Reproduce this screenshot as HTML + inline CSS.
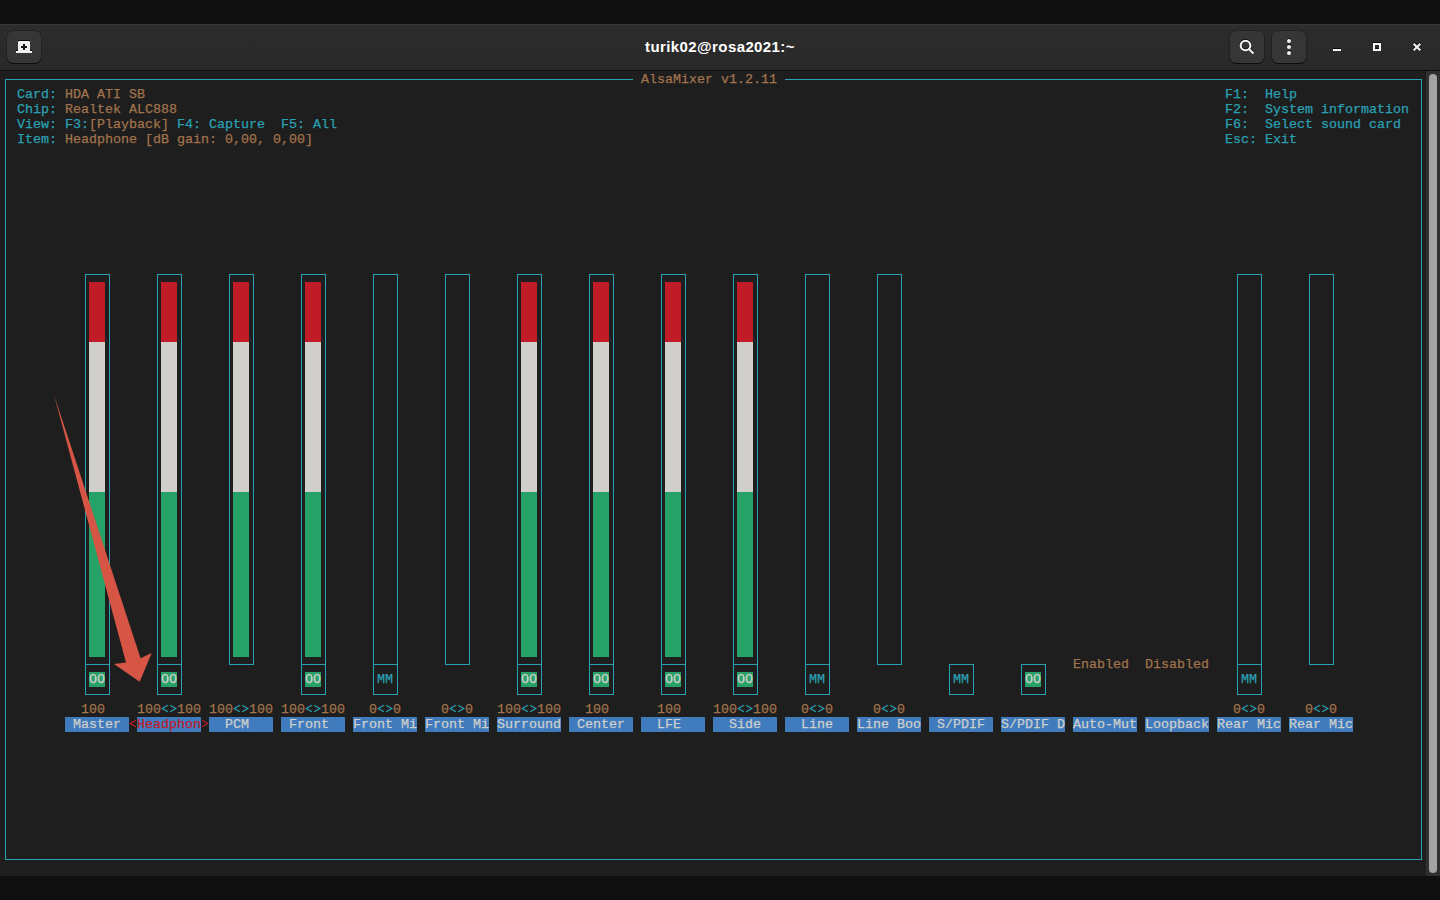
<!DOCTYPE html>
<html><head><meta charset="utf-8"><style>
html,body{margin:0;padding:0;}
body{width:1440px;height:900px;position:relative;overflow:hidden;background:#0f0f0f;}
div,span,svg{position:absolute;}
.t{font-family:"Liberation Mono",monospace;font-size:13.3333px;line-height:15px;height:15px;white-space:pre;font-weight:normal;-webkit-text-stroke:0.25px currentColor;}
.title{font-family:"Liberation Sans",sans-serif;font-weight:bold;font-size:15px;letter-spacing:0.4px;color:#ffffff;white-space:pre;}
.btn{background:#363636;border-radius:6px;box-shadow:0 0 0 1px rgba(0,0,0,0.2),0 1px 0 rgba(0,0,0,0.6);}
.sw{font-weight:normal;}
.rg{font-weight:normal;}
.ic{overflow:visible;filter:drop-shadow(0 -1px 0 rgba(0,0,0,0.85));}
</style></head><body>
<div style="left:0;top:24px;width:1440px;height:46px;background:linear-gradient(#2c2c2c,#292929);"></div>
<div style="left:0;top:24px;width:1440px;height:1px;background:#383838;"></div>
<div style="left:0;top:70px;width:1440px;height:1px;background:#0e0e0e;"></div>
<div style="left:0;top:71px;width:1440px;height:805px;background:#1e1e1e;"></div>
<div style="left:1426px;top:71px;width:14px;height:805px;background:#303030;"></div>
<div style="left:1429px;top:74px;width:8px;height:799px;border-radius:4px;background:#a3a3a3;"></div>
<div class="btn" style="left:7px;top:31px;width:34px;height:32px;"></div>
<svg class="ic" style="left:7px;top:31px" width="34" height="32" viewBox="0 0 34 32">
 <path d="M12 10 h10 a1 1 0 0 1 1 1 v9 h2 v2 h-16 v-2 h2 v-9 a1 1 0 0 1 1-1z" fill="#f0f0f0"/>
 <path d="M16 13 h2 v2 h2 v2 h-2 v2 h-2 v-2 h-2 v-2 h2z" fill="#1a1a1a"/>
</svg>
<div class="btn" style="left:1230px;top:31px;width:34px;height:32px;"></div>
<svg class="ic" style="left:1230px;top:31px" width="34" height="32" viewBox="0 0 34 32">
 <circle cx="15.5" cy="14.5" r="4.8" fill="none" stroke="#f5f5f5" stroke-width="2"/>
 <path d="M19 18 L23.5 22.5" stroke="#f5f5f5" stroke-width="2"/>
</svg>
<div class="btn" style="left:1272px;top:31px;width:34px;height:32px;"></div>
<svg class="ic" style="left:1272px;top:31px" width="34" height="32" viewBox="0 0 34 32">
 <circle cx="17" cy="10" r="2" fill="#f0f0f0"/><circle cx="17" cy="16" r="2" fill="#f0f0f0"/><circle cx="17" cy="22" r="2" fill="#f0f0f0"/>
</svg>
<svg class="ic" style="left:1333px;top:43px" width="8" height="8" viewBox="0 0 8 8"><rect x="0" y="6" width="8" height="2" fill="#f8f8f8"/></svg>
<svg class="ic" style="left:1373px;top:43px" width="8" height="8" viewBox="0 0 8 8"><path d="M0 0h8v8h-8z M2 2v4h4v-4z" fill="#f8f8f8" fill-rule="evenodd"/></svg>
<svg class="ic" style="left:1413px;top:43px" width="8" height="8" viewBox="0 0 8 8"><path d="M0.7 0.7 L7.3 7.3 M7.3 0.7 L0.7 7.3" stroke="#f0f0f0" stroke-width="2"/></svg>
<span class="title" style="left:0;top:38px;width:1440px;text-align:center;">turik02@rosa2021:~</span>
<div style="left:5px;top:79px;width:628px;height:1px;background:#2aa1b3;"></div>
<div style="left:785px;top:79px;width:637px;height:1px;background:#2aa1b3;"></div>
<span class="t" style="left:641px;top:72px;color:#a2734c;">AlsaMixer v1.2.11</span>
<div style="left:5px;top:79px;width:1px;height:781px;background:#2aa1b3;"></div>
<div style="left:1421px;top:79px;width:1px;height:781px;background:#2aa1b3;"></div>
<div style="left:5px;top:859px;width:1417px;height:1px;background:#2aa1b3;"></div>
<span class="t" style="left:17px;top:87px;color:#2aa1b3;">Card:</span>
<span class="t" style="left:65px;top:87px;color:#a2734c;">HDA ATI SB</span>
<span class="t" style="left:17px;top:102px;color:#2aa1b3;">Chip:</span>
<span class="t" style="left:65px;top:102px;color:#a2734c;">Realtek ALC888</span>
<span class="t" style="left:17px;top:132px;color:#2aa1b3;">Item:</span>
<span class="t" style="left:65px;top:132px;color:#a2734c;">Headphone [dB gain: 0,00, 0,00]</span>
<span class="t" style="left:17px;top:117px;color:#2aa1b3;">View:</span>
<span class="t" style="left:65px;top:117px;color:#2aa1b3;">F3:</span>
<span class="t" style="left:89px;top:117px;color:#a2734c;">[Playback]</span>
<span class="t" style="left:169px;top:117px;color:#2aa1b3;"> F4: Capture  F5: All</span>
<span class="t" style="left:1225px;top:87px;color:#2aa1b3;">F1:  Help</span>
<span class="t" style="left:1225px;top:102px;color:#2aa1b3;">F2:  System information</span>
<span class="t" style="left:1225px;top:117px;color:#2aa1b3;">F6:  Select sound card</span>
<span class="t" style="left:1225px;top:132px;color:#2aa1b3;">Esc: Exit</span>
<div style="left:85px;top:274px;width:25px;height:1px;background:#2aa1b3;"></div>
<div style="left:85px;top:274px;width:1px;height:421px;background:#2aa1b3;"></div>
<div style="left:109px;top:274px;width:1px;height:421px;background:#2aa1b3;"></div>
<div style="left:85px;top:694px;width:25px;height:1px;background:#2aa1b3;"></div>
<div style="left:85px;top:664px;width:25px;height:1px;background:#2aa1b3;"></div>
<div style="left:89px;top:282px;width:16px;height:60px;background:#c01c28;"></div>
<div style="left:89px;top:342px;width:16px;height:150px;background:#d0cfcc;"></div>
<div style="left:89px;top:492px;width:16px;height:165px;background:#26a269;"></div>
<span class="t sw" style="left:89px;top:672px;color:#d0cfcc;background:#26a269;">OO</span>
<span class="t" style="left:81px;top:702px;color:#a2734c;">100</span>
<span class="t lab" style="left:65px;top:717px;color:#d0cfcc;background:#3f7bbd;"> Master </span>
<div style="left:157px;top:274px;width:25px;height:1px;background:#2aa1b3;"></div>
<div style="left:157px;top:274px;width:1px;height:421px;background:#2aa1b3;"></div>
<div style="left:181px;top:274px;width:1px;height:421px;background:#2aa1b3;"></div>
<div style="left:157px;top:694px;width:25px;height:1px;background:#2aa1b3;"></div>
<div style="left:157px;top:664px;width:25px;height:1px;background:#2aa1b3;"></div>
<div style="left:161px;top:282px;width:16px;height:60px;background:#c01c28;"></div>
<div style="left:161px;top:342px;width:16px;height:150px;background:#d0cfcc;"></div>
<div style="left:161px;top:492px;width:16px;height:165px;background:#26a269;"></div>
<span class="t sw" style="left:161px;top:672px;color:#d0cfcc;background:#26a269;">OO</span>
<span class="t" style="left:137px;top:702px;color:#a2734c;">100</span>
<svg style="left:161px;top:702px" width="8" height="15" viewBox="0 0 8 15"><polyline points="6.9,3.3 1.2,6.5 6.9,9.7" fill="none" stroke="#2aa1b3" stroke-width="1.25"/></svg>
<svg style="left:169px;top:702px" width="8" height="15" viewBox="0 0 8 15"><polyline points="1.1,3.3 6.8,6.5 1.1,9.7" fill="none" stroke="#2aa1b3" stroke-width="1.25"/></svg>
<span class="t" style="left:177px;top:702px;color:#a2734c;">100</span>
<svg style="left:129px;top:717px" width="8" height="15" viewBox="0 0 8 15"><polyline points="6.9,3.3 1.2,6.5 6.9,9.7" fill="none" stroke="#c01c28" stroke-width="1.25"/></svg>
<svg style="left:201px;top:717px" width="8" height="15" viewBox="0 0 8 15"><polyline points="1.1,3.3 6.8,6.5 1.1,9.7" fill="none" stroke="#c01c28" stroke-width="1.25"/></svg>
<span class="t lab" style="left:137px;top:717px;color:#c01c28;background:#3f7bbd;">Headphon</span>
<div style="left:229px;top:274px;width:25px;height:1px;background:#2aa1b3;"></div>
<div style="left:229px;top:274px;width:1px;height:391px;background:#2aa1b3;"></div>
<div style="left:253px;top:274px;width:1px;height:391px;background:#2aa1b3;"></div>
<div style="left:229px;top:664px;width:25px;height:1px;background:#2aa1b3;"></div>
<div style="left:233px;top:282px;width:16px;height:60px;background:#c01c28;"></div>
<div style="left:233px;top:342px;width:16px;height:150px;background:#d0cfcc;"></div>
<div style="left:233px;top:492px;width:16px;height:165px;background:#26a269;"></div>
<span class="t" style="left:209px;top:702px;color:#a2734c;">100</span>
<svg style="left:233px;top:702px" width="8" height="15" viewBox="0 0 8 15"><polyline points="6.9,3.3 1.2,6.5 6.9,9.7" fill="none" stroke="#2aa1b3" stroke-width="1.25"/></svg>
<svg style="left:241px;top:702px" width="8" height="15" viewBox="0 0 8 15"><polyline points="1.1,3.3 6.8,6.5 1.1,9.7" fill="none" stroke="#2aa1b3" stroke-width="1.25"/></svg>
<span class="t" style="left:249px;top:702px;color:#a2734c;">100</span>
<span class="t lab" style="left:209px;top:717px;color:#d0cfcc;background:#3f7bbd;">  PCM   </span>
<div style="left:301px;top:274px;width:25px;height:1px;background:#2aa1b3;"></div>
<div style="left:301px;top:274px;width:1px;height:421px;background:#2aa1b3;"></div>
<div style="left:325px;top:274px;width:1px;height:421px;background:#2aa1b3;"></div>
<div style="left:301px;top:694px;width:25px;height:1px;background:#2aa1b3;"></div>
<div style="left:301px;top:664px;width:25px;height:1px;background:#2aa1b3;"></div>
<div style="left:305px;top:282px;width:16px;height:60px;background:#c01c28;"></div>
<div style="left:305px;top:342px;width:16px;height:150px;background:#d0cfcc;"></div>
<div style="left:305px;top:492px;width:16px;height:165px;background:#26a269;"></div>
<span class="t sw" style="left:305px;top:672px;color:#d0cfcc;background:#26a269;">OO</span>
<span class="t" style="left:281px;top:702px;color:#a2734c;">100</span>
<svg style="left:305px;top:702px" width="8" height="15" viewBox="0 0 8 15"><polyline points="6.9,3.3 1.2,6.5 6.9,9.7" fill="none" stroke="#2aa1b3" stroke-width="1.25"/></svg>
<svg style="left:313px;top:702px" width="8" height="15" viewBox="0 0 8 15"><polyline points="1.1,3.3 6.8,6.5 1.1,9.7" fill="none" stroke="#2aa1b3" stroke-width="1.25"/></svg>
<span class="t" style="left:321px;top:702px;color:#a2734c;">100</span>
<span class="t lab" style="left:281px;top:717px;color:#d0cfcc;background:#3f7bbd;"> Front  </span>
<div style="left:373px;top:274px;width:25px;height:1px;background:#2aa1b3;"></div>
<div style="left:373px;top:274px;width:1px;height:421px;background:#2aa1b3;"></div>
<div style="left:397px;top:274px;width:1px;height:421px;background:#2aa1b3;"></div>
<div style="left:373px;top:694px;width:25px;height:1px;background:#2aa1b3;"></div>
<div style="left:373px;top:664px;width:25px;height:1px;background:#2aa1b3;"></div>
<span class="t" style="left:377px;top:672px;color:#2aa1b3;">MM</span>
<span class="t" style="left:369px;top:702px;color:#a2734c;">0</span>
<svg style="left:377px;top:702px" width="8" height="15" viewBox="0 0 8 15"><polyline points="6.9,3.3 1.2,6.5 6.9,9.7" fill="none" stroke="#2aa1b3" stroke-width="1.25"/></svg>
<svg style="left:385px;top:702px" width="8" height="15" viewBox="0 0 8 15"><polyline points="1.1,3.3 6.8,6.5 1.1,9.7" fill="none" stroke="#2aa1b3" stroke-width="1.25"/></svg>
<span class="t" style="left:393px;top:702px;color:#a2734c;">0</span>
<span class="t lab" style="left:353px;top:717px;color:#d0cfcc;background:#3f7bbd;">Front Mi</span>
<div style="left:445px;top:274px;width:25px;height:1px;background:#2aa1b3;"></div>
<div style="left:445px;top:274px;width:1px;height:391px;background:#2aa1b3;"></div>
<div style="left:469px;top:274px;width:1px;height:391px;background:#2aa1b3;"></div>
<div style="left:445px;top:664px;width:25px;height:1px;background:#2aa1b3;"></div>
<span class="t" style="left:441px;top:702px;color:#a2734c;">0</span>
<svg style="left:449px;top:702px" width="8" height="15" viewBox="0 0 8 15"><polyline points="6.9,3.3 1.2,6.5 6.9,9.7" fill="none" stroke="#2aa1b3" stroke-width="1.25"/></svg>
<svg style="left:457px;top:702px" width="8" height="15" viewBox="0 0 8 15"><polyline points="1.1,3.3 6.8,6.5 1.1,9.7" fill="none" stroke="#2aa1b3" stroke-width="1.25"/></svg>
<span class="t" style="left:465px;top:702px;color:#a2734c;">0</span>
<span class="t lab" style="left:425px;top:717px;color:#d0cfcc;background:#3f7bbd;">Front Mi</span>
<div style="left:517px;top:274px;width:25px;height:1px;background:#2aa1b3;"></div>
<div style="left:517px;top:274px;width:1px;height:421px;background:#2aa1b3;"></div>
<div style="left:541px;top:274px;width:1px;height:421px;background:#2aa1b3;"></div>
<div style="left:517px;top:694px;width:25px;height:1px;background:#2aa1b3;"></div>
<div style="left:517px;top:664px;width:25px;height:1px;background:#2aa1b3;"></div>
<div style="left:521px;top:282px;width:16px;height:60px;background:#c01c28;"></div>
<div style="left:521px;top:342px;width:16px;height:150px;background:#d0cfcc;"></div>
<div style="left:521px;top:492px;width:16px;height:165px;background:#26a269;"></div>
<span class="t sw" style="left:521px;top:672px;color:#d0cfcc;background:#26a269;">OO</span>
<span class="t" style="left:497px;top:702px;color:#a2734c;">100</span>
<svg style="left:521px;top:702px" width="8" height="15" viewBox="0 0 8 15"><polyline points="6.9,3.3 1.2,6.5 6.9,9.7" fill="none" stroke="#2aa1b3" stroke-width="1.25"/></svg>
<svg style="left:529px;top:702px" width="8" height="15" viewBox="0 0 8 15"><polyline points="1.1,3.3 6.8,6.5 1.1,9.7" fill="none" stroke="#2aa1b3" stroke-width="1.25"/></svg>
<span class="t" style="left:537px;top:702px;color:#a2734c;">100</span>
<span class="t lab" style="left:497px;top:717px;color:#d0cfcc;background:#3f7bbd;">Surround</span>
<div style="left:589px;top:274px;width:25px;height:1px;background:#2aa1b3;"></div>
<div style="left:589px;top:274px;width:1px;height:421px;background:#2aa1b3;"></div>
<div style="left:613px;top:274px;width:1px;height:421px;background:#2aa1b3;"></div>
<div style="left:589px;top:694px;width:25px;height:1px;background:#2aa1b3;"></div>
<div style="left:589px;top:664px;width:25px;height:1px;background:#2aa1b3;"></div>
<div style="left:593px;top:282px;width:16px;height:60px;background:#c01c28;"></div>
<div style="left:593px;top:342px;width:16px;height:150px;background:#d0cfcc;"></div>
<div style="left:593px;top:492px;width:16px;height:165px;background:#26a269;"></div>
<span class="t sw" style="left:593px;top:672px;color:#d0cfcc;background:#26a269;">OO</span>
<span class="t" style="left:585px;top:702px;color:#a2734c;">100</span>
<span class="t lab" style="left:569px;top:717px;color:#d0cfcc;background:#3f7bbd;"> Center </span>
<div style="left:661px;top:274px;width:25px;height:1px;background:#2aa1b3;"></div>
<div style="left:661px;top:274px;width:1px;height:421px;background:#2aa1b3;"></div>
<div style="left:685px;top:274px;width:1px;height:421px;background:#2aa1b3;"></div>
<div style="left:661px;top:694px;width:25px;height:1px;background:#2aa1b3;"></div>
<div style="left:661px;top:664px;width:25px;height:1px;background:#2aa1b3;"></div>
<div style="left:665px;top:282px;width:16px;height:60px;background:#c01c28;"></div>
<div style="left:665px;top:342px;width:16px;height:150px;background:#d0cfcc;"></div>
<div style="left:665px;top:492px;width:16px;height:165px;background:#26a269;"></div>
<span class="t sw" style="left:665px;top:672px;color:#d0cfcc;background:#26a269;">OO</span>
<span class="t" style="left:657px;top:702px;color:#a2734c;">100</span>
<span class="t lab" style="left:641px;top:717px;color:#d0cfcc;background:#3f7bbd;">  LFE   </span>
<div style="left:733px;top:274px;width:25px;height:1px;background:#2aa1b3;"></div>
<div style="left:733px;top:274px;width:1px;height:421px;background:#2aa1b3;"></div>
<div style="left:757px;top:274px;width:1px;height:421px;background:#2aa1b3;"></div>
<div style="left:733px;top:694px;width:25px;height:1px;background:#2aa1b3;"></div>
<div style="left:733px;top:664px;width:25px;height:1px;background:#2aa1b3;"></div>
<div style="left:737px;top:282px;width:16px;height:60px;background:#c01c28;"></div>
<div style="left:737px;top:342px;width:16px;height:150px;background:#d0cfcc;"></div>
<div style="left:737px;top:492px;width:16px;height:165px;background:#26a269;"></div>
<span class="t sw" style="left:737px;top:672px;color:#d0cfcc;background:#26a269;">OO</span>
<span class="t" style="left:713px;top:702px;color:#a2734c;">100</span>
<svg style="left:737px;top:702px" width="8" height="15" viewBox="0 0 8 15"><polyline points="6.9,3.3 1.2,6.5 6.9,9.7" fill="none" stroke="#2aa1b3" stroke-width="1.25"/></svg>
<svg style="left:745px;top:702px" width="8" height="15" viewBox="0 0 8 15"><polyline points="1.1,3.3 6.8,6.5 1.1,9.7" fill="none" stroke="#2aa1b3" stroke-width="1.25"/></svg>
<span class="t" style="left:753px;top:702px;color:#a2734c;">100</span>
<span class="t lab" style="left:713px;top:717px;color:#d0cfcc;background:#3f7bbd;">  Side  </span>
<div style="left:805px;top:274px;width:25px;height:1px;background:#2aa1b3;"></div>
<div style="left:805px;top:274px;width:1px;height:421px;background:#2aa1b3;"></div>
<div style="left:829px;top:274px;width:1px;height:421px;background:#2aa1b3;"></div>
<div style="left:805px;top:694px;width:25px;height:1px;background:#2aa1b3;"></div>
<div style="left:805px;top:664px;width:25px;height:1px;background:#2aa1b3;"></div>
<span class="t" style="left:809px;top:672px;color:#2aa1b3;">MM</span>
<span class="t" style="left:801px;top:702px;color:#a2734c;">0</span>
<svg style="left:809px;top:702px" width="8" height="15" viewBox="0 0 8 15"><polyline points="6.9,3.3 1.2,6.5 6.9,9.7" fill="none" stroke="#2aa1b3" stroke-width="1.25"/></svg>
<svg style="left:817px;top:702px" width="8" height="15" viewBox="0 0 8 15"><polyline points="1.1,3.3 6.8,6.5 1.1,9.7" fill="none" stroke="#2aa1b3" stroke-width="1.25"/></svg>
<span class="t" style="left:825px;top:702px;color:#a2734c;">0</span>
<span class="t lab" style="left:785px;top:717px;color:#d0cfcc;background:#3f7bbd;">  Line  </span>
<div style="left:877px;top:274px;width:25px;height:1px;background:#2aa1b3;"></div>
<div style="left:877px;top:274px;width:1px;height:391px;background:#2aa1b3;"></div>
<div style="left:901px;top:274px;width:1px;height:391px;background:#2aa1b3;"></div>
<div style="left:877px;top:664px;width:25px;height:1px;background:#2aa1b3;"></div>
<span class="t" style="left:873px;top:702px;color:#a2734c;">0</span>
<svg style="left:881px;top:702px" width="8" height="15" viewBox="0 0 8 15"><polyline points="6.9,3.3 1.2,6.5 6.9,9.7" fill="none" stroke="#2aa1b3" stroke-width="1.25"/></svg>
<svg style="left:889px;top:702px" width="8" height="15" viewBox="0 0 8 15"><polyline points="1.1,3.3 6.8,6.5 1.1,9.7" fill="none" stroke="#2aa1b3" stroke-width="1.25"/></svg>
<span class="t" style="left:897px;top:702px;color:#a2734c;">0</span>
<span class="t lab" style="left:857px;top:717px;color:#d0cfcc;background:#3f7bbd;">Line Boo</span>
<div style="left:949px;top:664px;width:25px;height:1px;background:#2aa1b3;"></div>
<div style="left:949px;top:664px;width:1px;height:31px;background:#2aa1b3;"></div>
<div style="left:973px;top:664px;width:1px;height:31px;background:#2aa1b3;"></div>
<div style="left:949px;top:694px;width:25px;height:1px;background:#2aa1b3;"></div>
<span class="t" style="left:953px;top:672px;color:#2aa1b3;">MM</span>
<span class="t lab" style="left:929px;top:717px;color:#d0cfcc;background:#3f7bbd;"> S/PDIF </span>
<div style="left:1021px;top:664px;width:25px;height:1px;background:#2aa1b3;"></div>
<div style="left:1021px;top:664px;width:1px;height:31px;background:#2aa1b3;"></div>
<div style="left:1045px;top:664px;width:1px;height:31px;background:#2aa1b3;"></div>
<div style="left:1021px;top:694px;width:25px;height:1px;background:#2aa1b3;"></div>
<span class="t sw" style="left:1025px;top:672px;color:#d0cfcc;background:#26a269;">OO</span>
<span class="t lab" style="left:1001px;top:717px;color:#d0cfcc;background:#3f7bbd;">S/PDIF D</span>
<span class="t" style="left:1073px;top:657px;color:#a2734c;">Enabled</span>
<span class="t lab" style="left:1073px;top:717px;color:#d0cfcc;background:#3f7bbd;">Auto-Mut</span>
<span class="t" style="left:1145px;top:657px;color:#a2734c;">Disabled</span>
<span class="t lab" style="left:1145px;top:717px;color:#d0cfcc;background:#3f7bbd;">Loopback</span>
<div style="left:1237px;top:274px;width:25px;height:1px;background:#2aa1b3;"></div>
<div style="left:1237px;top:274px;width:1px;height:421px;background:#2aa1b3;"></div>
<div style="left:1261px;top:274px;width:1px;height:421px;background:#2aa1b3;"></div>
<div style="left:1237px;top:694px;width:25px;height:1px;background:#2aa1b3;"></div>
<div style="left:1237px;top:664px;width:25px;height:1px;background:#2aa1b3;"></div>
<span class="t" style="left:1241px;top:672px;color:#2aa1b3;">MM</span>
<span class="t" style="left:1233px;top:702px;color:#a2734c;">0</span>
<svg style="left:1241px;top:702px" width="8" height="15" viewBox="0 0 8 15"><polyline points="6.9,3.3 1.2,6.5 6.9,9.7" fill="none" stroke="#2aa1b3" stroke-width="1.25"/></svg>
<svg style="left:1249px;top:702px" width="8" height="15" viewBox="0 0 8 15"><polyline points="1.1,3.3 6.8,6.5 1.1,9.7" fill="none" stroke="#2aa1b3" stroke-width="1.25"/></svg>
<span class="t" style="left:1257px;top:702px;color:#a2734c;">0</span>
<span class="t lab" style="left:1217px;top:717px;color:#d0cfcc;background:#3f7bbd;">Rear Mic</span>
<div style="left:1309px;top:274px;width:25px;height:1px;background:#2aa1b3;"></div>
<div style="left:1309px;top:274px;width:1px;height:391px;background:#2aa1b3;"></div>
<div style="left:1333px;top:274px;width:1px;height:391px;background:#2aa1b3;"></div>
<div style="left:1309px;top:664px;width:25px;height:1px;background:#2aa1b3;"></div>
<span class="t" style="left:1305px;top:702px;color:#a2734c;">0</span>
<svg style="left:1313px;top:702px" width="8" height="15" viewBox="0 0 8 15"><polyline points="6.9,3.3 1.2,6.5 6.9,9.7" fill="none" stroke="#2aa1b3" stroke-width="1.25"/></svg>
<svg style="left:1321px;top:702px" width="8" height="15" viewBox="0 0 8 15"><polyline points="1.1,3.3 6.8,6.5 1.1,9.7" fill="none" stroke="#2aa1b3" stroke-width="1.25"/></svg>
<span class="t" style="left:1329px;top:702px;color:#a2734c;">0</span>
<span class="t lab" style="left:1289px;top:717px;color:#d0cfcc;background:#3f7bbd;">Rear Mic</span>
<svg style="left:0;top:0" width="1440" height="900"><polygon points="54,394.8 140.6,658.2 151.7,652.9 139.7,681.7 114,664.1 126,662.6" fill="#d65545"/></svg>
</body></html>
